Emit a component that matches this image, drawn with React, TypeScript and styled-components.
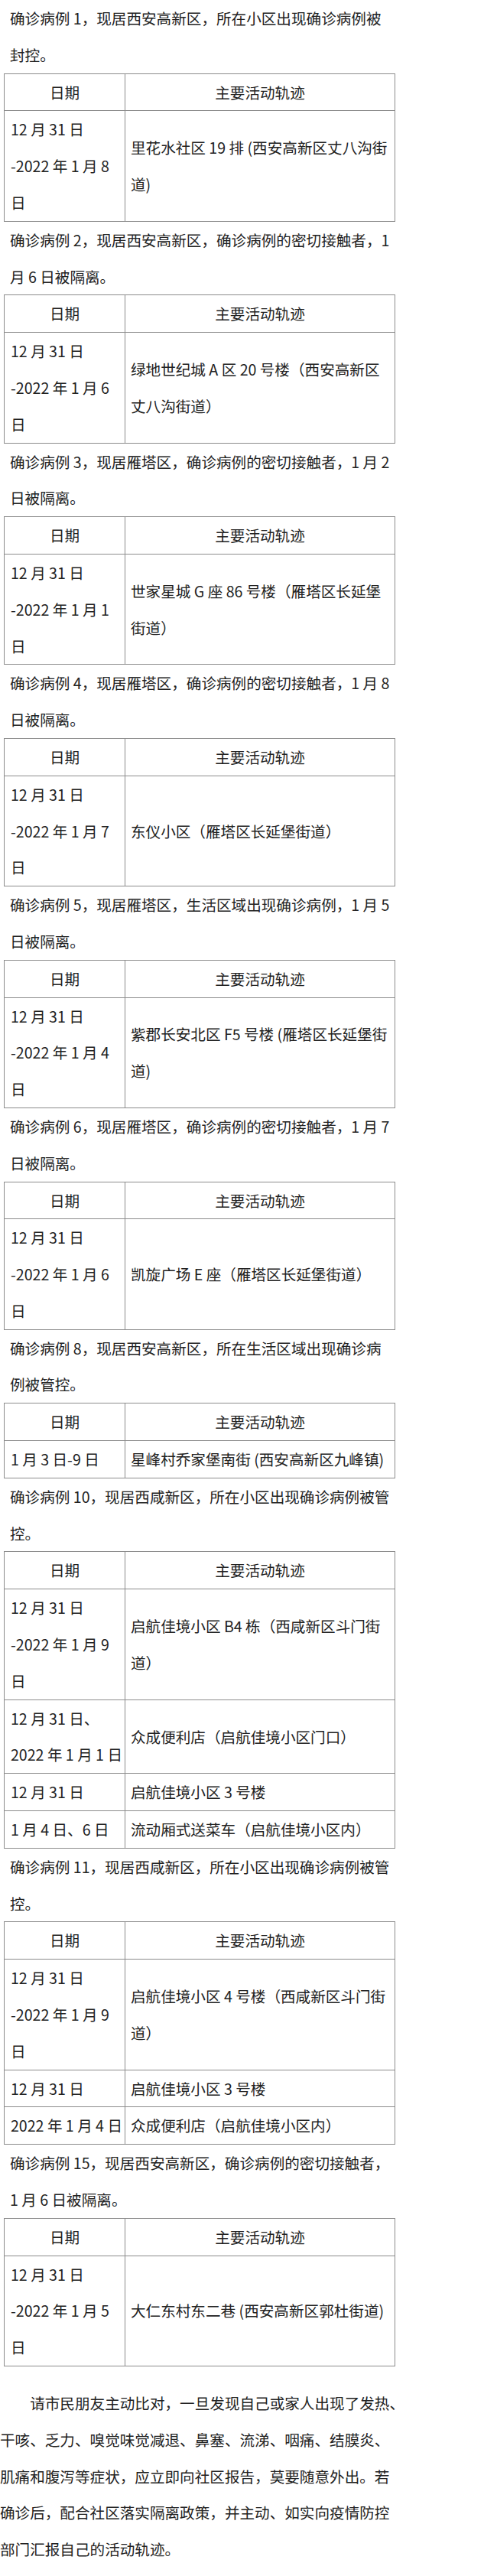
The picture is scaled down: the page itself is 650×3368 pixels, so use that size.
import React from "react";
import styled, { createGlobalStyle } from "styled-components";

const GlobalStyle = createGlobalStyle`
  html, body {
    margin: 0;
    padding: 0;
    background: #ffffff;
  }
  body {
    font-family: "Noto Sans CJK SC", "Noto Sans", sans-serif;
    color: #222222;
  }
`;

const FONT = "19.6px";
const LINE = "47.8px";

const Page = styled.main`
  width: 650px;
  min-height: 3368px;
  background: #ffffff;
  font-size: ${FONT};
  line-height: ${LINE};
  display: flex;
  flex-direction: column;
`;

const CaseText = styled.p`
  margin: 0;
  padding-left: 13px;
  width: 500px;
`;

const TrackTable = styled.table`
  margin-left: 5px;
  width: 512px;
  border-collapse: collapse;
  table-layout: fixed;
`;

const Cell = styled.td`
  border: 1px solid #8c8c8c;
  vertical-align: middle;
  padding: 0;
  line-height: ${LINE};
`;

const HeadCell = styled(Cell)`
  text-align: center;
`;

const DateCell = styled(Cell)`
  padding: 0 4px 0 8px;
`;

const PlaceCell = styled(Cell)`
  padding: 0 2px 0 7px;
`;

const DateLine = styled.div`
  white-space: nowrap;
`;

const Notice = styled.p`
  margin: 24px 0 0 0;
  width: 540px;
  text-indent: 2em;
`;

type Row = { date: string[]; place: string };
type Case = { text: string; rows: Row[] };

const range = (end: string): string[] => ["12 月 31 日", `-2022 年 1 月 ${end}`, "日"];

const cases: Case[] = [
  {
    text: "确诊病例 1，现居西安高新区，所在小区出现确诊病例被封控。",
    rows: [{ date: range("8"), place: "里花水社区 19 排 (西安高新区丈八沟街道)" }],
  },
  {
    text: "确诊病例 2，现居西安高新区，确诊病例的密切接触者，1 月 6 日被隔离。",
    rows: [{ date: range("6"), place: "绿地世纪城 A 区 20 号楼（西安高新区丈八沟街道）" }],
  },
  {
    text: "确诊病例 3，现居雁塔区，确诊病例的密切接触者，1 月 2 日被隔离。",
    rows: [{ date: range("1"), place: "世家星城 G 座 86 号楼（雁塔区长延堡街道）" }],
  },
  {
    text: "确诊病例 4，现居雁塔区，确诊病例的密切接触者，1 月 8 日被隔离。",
    rows: [{ date: range("7"), place: "东仪小区（雁塔区长延堡街道）" }],
  },
  {
    text: "确诊病例 5，现居雁塔区，生活区域出现确诊病例，1 月 5 日被隔离。",
    rows: [{ date: range("4"), place: "紫郡长安北区 F5 号楼 (雁塔区长延堡街道)" }],
  },
  {
    text: "确诊病例 6，现居雁塔区，确诊病例的密切接触者，1 月 7 日被隔离。",
    rows: [{ date: range("6"), place: "凯旋广场 E 座（雁塔区长延堡街道）" }],
  },
  {
    text: "确诊病例 8，现居西安高新区，所在生活区域出现确诊病例被管控。",
    rows: [{ date: ["1 月 3 日-9 日"], place: "星峰村乔家堡南街 (西安高新区九峰镇)" }],
  },
  {
    text: "确诊病例 10，现居西咸新区，所在小区出现确诊病例被管控。",
    rows: [
      { date: range("9"), place: "启航佳境小区 B4 栋（西咸新区斗门街道）" },
      { date: ["12 月 31 日、", "2022 年 1 月 1 日"], place: "众成便利店（启航佳境小区门口）" },
      { date: ["12 月 31 日"], place: "启航佳境小区 3 号楼" },
      { date: ["1 月 4 日、6 日"], place: "流动厢式送菜车（启航佳境小区内）" },
    ],
  },
  {
    text: "确诊病例 11，现居西咸新区，所在小区出现确诊病例被管控。",
    rows: [
      { date: range("9"), place: "启航佳境小区 4 号楼（西咸新区斗门街道）" },
      { date: ["12 月 31 日"], place: "启航佳境小区 3 号楼" },
      { date: ["2022 年 1 月 4 日"], place: "众成便利店（启航佳境小区内）" },
    ],
  },
  {
    text: "确诊病例 15，现居西安高新区，确诊病例的密切接触者，1 月 6 日被隔离。",
    rows: [{ date: range("5"), place: "大仁东村东二巷 (西安高新区郭杜街道)" }],
  },
];

const noticeLines = [
  "请市民朋友主动比对，一旦发现自己或家人出现了发热、",
  "干咳、乏力、嗅觉味觉减退、鼻塞、流涕、咽痛、结膜炎、",
  "肌痛和腹泻等症状，应立即向社区报告，莫要随意外出。若",
  "确诊后，配合社区落实隔离政策，并主动、如实向疫情防控",
  "部门汇报自己的活动轨迹。",
];

export default function App() {
  return (
    <>
      <GlobalStyle />
      <Page>
        {cases.map((c, i) => (
          <React.Fragment key={i}>
            <CaseText>{c.text}</CaseText>
            <TrackTable>
              <colgroup>
                <col style={{ width: "158px" }} />
                <col />
              </colgroup>
              <thead>
                <tr>
                  <HeadCell as="th" style={{ fontWeight: 400 }}>日期</HeadCell>
                  <HeadCell as="th" style={{ fontWeight: 400 }}>主要活动轨迹</HeadCell>
                </tr>
              </thead>
              <tbody>
                {c.rows.map((r, j) => (
                  <tr key={j}>
                    <DateCell>
                      {r.date.map((d, k) => (
                        <DateLine key={k}>{d}</DateLine>
                      ))}
                    </DateCell>
                    <PlaceCell>{r.place}</PlaceCell>
                  </tr>
                ))}
              </tbody>
            </TrackTable>
          </React.Fragment>
        ))}
        <Notice>
          {noticeLines.map((l, i) => (
            <React.Fragment key={i}>
              {l}
              {i < noticeLines.length - 1 && <br />}
            </React.Fragment>
          ))}
        </Notice>
      </Page>
    </>
  );
}
